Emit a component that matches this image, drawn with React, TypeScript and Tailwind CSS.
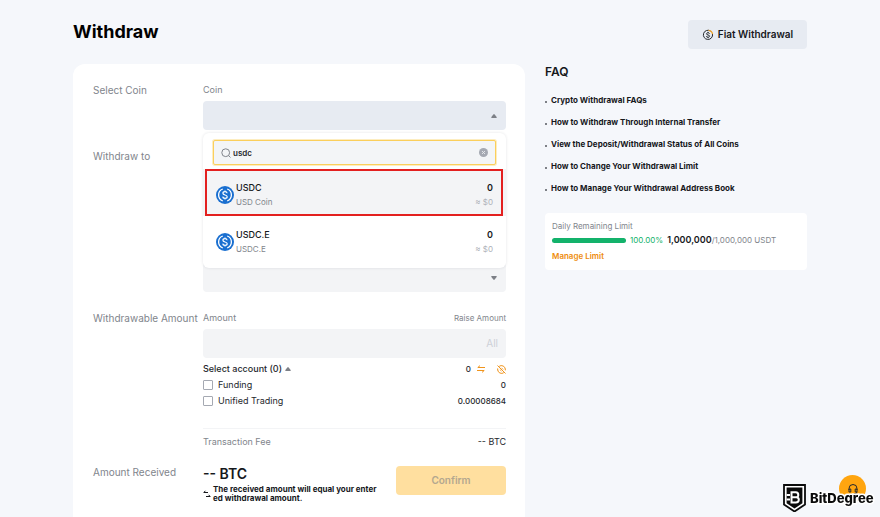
import React, { useState } from 'react';

const COINS = [
  { symbol: 'USDC', name: 'USD Coin' },
  { symbol: 'USDC.E', name: 'USDC.E' },
];

const FAQ_LINKS = [
  'Crypto Withdrawal FAQs',
  'How to Withdraw Through Internal Transfer',
  'View the Deposit/Withdrawal Status of All Coins',
  'How to Change Your Withdrawal Limit',
  'How to Manage Your Withdrawal Address Book',
];

const ACCOUNTS = [
  { id: 'funding', label: 'Funding', balance: '0' },
  { id: 'unified', label: 'Unified Trading', balance: '0.00008684' },
];

const Caret: React.FC<{ down?: boolean }> = ({ down }) => (
  <svg className={`w-[6px] h-[4px] shrink-0 ${down ? 'rotate-180' : ''}`} viewBox="0 0 6 4" fill="#7d8087">
    <path d="M2.5 0.3Q3 0 3.5 0.3L5.8 3.2Q6 4 5 4H1Q0 4 0.2 3.2Z" />
  </svg>
);

const UsdcIcon: React.FC = () => (
  <svg className="w-[18px] h-[18px] shrink-0" viewBox="0 0 18 18" fill="none">
    <circle cx="9" cy="9" r="9" fill="#1a6fd0" />
    <path d="M6.8 3a6.4 6.4 0 0 0 0 12M11.2 3a6.4 6.4 0 0 1 0 12" stroke="#fff" strokeWidth="1.3" />
    <path d="M11.1 7.2C11 6.2 10.2 5.7 9 5.7S6.9 6.3 6.9 7.3c0 2.3 4.3 1.1 4.3 3.4 0 1-.9 1.6-2.2 1.6s-2.2-.6-2.3-1.7M9 4.4v1.3M9 12.3v1.3" stroke="#fff" strokeWidth="1.2" />
  </svg>
);

const Header: React.FC = () => (
  <header className="flex items-start justify-between">
    <h1 className="text-[18px] leading-6 font-bold text-black">Withdraw</h1>
    <button type="button" className="flex h-[29px] w-[119px] items-center justify-center gap-1 rounded bg-[#e7ebf2] text-[10px] font-semibold text-[#16181c]">
      <svg className="w-3 h-3" viewBox="0 0 12 12" fill="none">
        <path d="M8.5 2A4.6 4.6 0 1 0 10.5 5" stroke="#25282d" strokeWidth="1" />
        <path d="M6.5 1.3A4.6 4.6 0 0 1 10.6 5.2" stroke="#f0a020" strokeWidth="1.2" />
        <path d="M7.6 4.6C7.4 4 6.8 3.8 6 3.8S4.5 4.2 4.5 4.9C4.5 6.4 7.6 5.6 7.6 7.1 7.6 7.8 7 8.2 6 8.2S4.5 7.9 4.4 7.2M6 2.9v.9M6 8.2v.9" stroke="#25282d" strokeWidth="1" />
      </svg>
      Fiat Withdrawal
    </button>
  </header>
);

const CoinDropdown: React.FC = () => {
  const [query, setQuery] = useState('usdc');

  return (
    <div className="absolute inset-x-0 top-full z-10 mt-[3px] rounded-md bg-white pt-[7px] pb-[5px] shadow-[0_0_3px_rgba(30,40,60,0.12)]">
      {/* Search */}
      <div className="mx-[10px] flex h-[25px] items-center gap-[2px] rounded-xs border border-[#fbcf5c] bg-[#f3f5f7] px-[7px] shadow-[0_0_0_1px_#fdedc0]">
        <svg className="w-[10px] h-[10px] shrink-0" viewBox="0 0 10 10" fill="none" stroke="#81858c">
          <circle cx="4.7" cy="4.7" r="3.9" />
          <path d="M7.5 7.5L9.5 9.5" />
        </svg>
        <input
          type="text"
          aria-label="Search coin"
          value={query}
          onChange={(e) => setQuery(e.target.value)}
          className="min-w-0 flex-1 bg-transparent text-[8px] font-semibold text-[#25282d] outline-none"
        />
        <button type="button" aria-label="Clear search" onClick={() => setQuery('')}>
          <svg className="block w-[9px] h-[9px]" viewBox="0 0 9 9">
            <circle cx="4.5" cy="4.5" r="4.5" fill="#a5a9b2" />
            <path d="M3 3l3 3M6 3L3 6" stroke="#e9ebee" strokeWidth="0.9" />
          </svg>
        </button>
      </div>

      {/* Options */}
      <ul role="listbox" aria-label="Coins" className="mt-1">
        {COINS.map((coin, i) => (
          <li
            key={coin.symbol}
            role="option"
            aria-selected={i === 0}
            className={`relative flex h-[47px] items-center gap-[2px] px-[13px] pt-[5px] ${i === 0 ? 'bg-[#f3f4f6]' : 'bg-white'}`}
          >
            {i === 0 && <span className="absolute inset-y-0 left-[2px] right-[3px] border-2 border-[#e3201f]"></span>}
            <UsdcIcon />
            <div className="flex flex-1 flex-col">
              <span className="text-[9px] leading-[14px] font-medium text-[#16181c]">{coin.symbol}</span>
              <span className="text-[8px] leading-[14px] text-[#81858c]">{coin.name}</span>
            </div>
            <div className="flex flex-col text-right">
              <span className="text-[9px] leading-[14px] font-semibold text-[#16181c]">0</span>
              <span className="text-[8px] leading-[14px] text-[#adb1b8]">≈ $0</span>
            </div>
          </li>
        ))}
      </ul>
    </div>
  );
};

const WithdrawForm: React.FC = () => (
  <main className="flex flex-1 flex-col rounded-t-xl bg-white pt-5 pr-[19px] pl-5">
    {/* Coin */}
    <section className="flex h-[66px]">
      <h2 className="w-[110px] shrink-0 text-[10px] leading-3 text-[#81858c]">Select Coin</h2>
      <div className="min-w-0 flex-1">
        <span id="coin-label" className="block text-[9px] leading-3 text-[#81858c]">Coin</span>
        <div className="relative mt-[5px]">
          <button type="button" aria-labelledby="coin-label" aria-expanded="true" className="flex h-[29px] w-full items-center justify-end rounded bg-[#e7ebf2] px-[9px]">
            <Caret />
          </button>
          <CoinDropdown />
        </div>
      </div>
    </section>

    {/* Address */}
    <section className="flex h-[162px]">
      <h2 className="w-[110px] shrink-0 text-[10px] leading-3 text-[#81858c]">Withdraw to</h2>
      <div className="flex min-w-0 flex-1 flex-col justify-end pb-5">
        <button type="button" aria-label="Withdraw to" className="flex h-[29px] w-full items-center justify-end rounded bg-[#f3f4f6] px-[9px]">
          <Caret down />
        </button>
      </div>
    </section>

    {/* Amount */}
    <section className="flex">
      <h2 className="w-[110px] shrink-0 whitespace-nowrap text-[10px] leading-3 text-[#81858c]">Withdrawable Amount</h2>
      <div className="min-w-0 flex-1">
        <div className="flex items-center justify-between">
          <label htmlFor="amount" className="text-[9px] leading-3 text-[#81858c]">Amount</label>
          <button type="button" className="text-[8px] leading-3 text-[#81858c]">Raise Amount</button>
        </div>
        <div className="mt-[5px] flex h-[29px] items-center rounded bg-[#f3f4f6] px-2">
          <input id="amount" type="text" className="min-w-0 flex-1 bg-transparent text-[10px] outline-none" />
          <button type="button" className="text-[10px] text-[#cdd0d6]">All</button>
        </div>

        <div className="mt-[3px] flex h-4 items-center justify-between text-[9px] text-[#25282d]">
          <button type="button" className="flex items-center gap-[3px] font-medium">
            Select account (0) <Caret />
          </button>
          <span className="flex items-center text-[8px] font-medium">
            0
            <svg className="ml-[6px] w-2 h-2 text-[#f0941d]" viewBox="0 0 8 8" fill="none" stroke="currentColor">
              <path d="M8 2.5H0.8L3 0.6M0 5.5H7.2L5 7.4" />
            </svg>
            <svg className="ml-3 w-[9px] h-[9px]" viewBox="0 0 9 9" fill="none" stroke="#f0941d">
              <path d="M2.2 1.3A3.9 3.9 0 0 1 8.3 4.2M6.8 7.7A3.9 3.9 0 0 1 0.7 4.8M0.5 0.5L8.5 8.5M0.7 3.4V5.2M8.3 3.8V5.4" />
              <path d="M4.5 2.8L6.2 4.5M2.8 4.5L4.5 6.2" strokeWidth="0.8" />
            </svg>
          </span>
        </div>

        {ACCOUNTS.map((account) => (
          <div key={account.id} className="flex h-4 items-center justify-between text-[#25282d]">
            <label htmlFor={account.id} className="flex items-center gap-[5px] text-[9px]">
              <input id={account.id} type="checkbox" className="w-[10px] h-[10px] appearance-none rounded-[1px] border border-[#a5a9b2] bg-white checked:bg-[#f0941d]" />
              {account.label}
            </label>
            <span className="text-[8px] leading-3 font-medium">{account.balance}</span>
          </div>
        ))}

        <div className="mt-[19px] flex h-[26px] items-center justify-between border-t border-[#f3f4f6] text-[9px]">
          <span className="text-[#81858c]">Transaction Fee</span>
          <span className="text-[#25282d]">-- BTC</span>
        </div>
      </div>
    </section>

    {/* Total */}
    <section className="mt-3 flex">
      <h2 className="w-[110px] shrink-0 text-[10px] leading-3 text-[#81858c]">Amount Received</h2>
      <div className="flex min-w-0 flex-1 items-start justify-between">
        <div>
          <p className="text-[14px] leading-4 font-semibold text-[#16181c]">-- BTC</p>
          <p className="mt-[3px] flex text-[8px] leading-[9px] font-bold text-[#16181c]">
            <svg className="mt-[5px] mr-[2px] w-2 h-2 shrink-0" viewBox="0 0 8 8" fill="none" stroke="currentColor">
              <path d="M5 2.5H0.8L2.4 0.8M3 6.5H7.2L5.6 4.8" />
            </svg>
            <span>The received amount will equal your enter<br />ed withdrawal amount.</span>
          </p>
        </div>
        <button type="button" disabled className="h-[29px] w-[110px] shrink-0 rounded bg-[#ffdf9f] text-[10px] font-semibold text-[#b3a78f]">
          Confirm
        </button>
      </div>
    </section>
  </main>
);

const Sidebar: React.FC = () => (
  <aside className="w-[262px] shrink-0">
    <h2 className="text-[12px] leading-4 font-semibold text-[#16181c]">FAQ</h2>
    <ul className="mt-[9px]">
      {FAQ_LINKS.map((text) => (
        <li key={text} className="flex h-[22px] items-center gap-1">
          <span className="mt-1 h-[2px] w-[2px] rounded-full bg-[#54585f]"></span>
          <a href="#" className="text-[8px] leading-3 font-bold text-[#16181c]">{text}</a>
        </li>
      ))}
    </ul>

    {/* Daily limit */}
    <div className="mt-[14px] rounded bg-white px-[7px] pt-[7px] pb-[6px]">
      <p className="text-[8px] leading-3 text-[#81858c]">Daily Remaining Limit</p>
      <div className="flex h-4 items-center">
        <div className="h-[5px] w-[74px] rounded-full bg-[#13b26b]"></div>
        <span className="ml-1 text-[8px] text-[#13b26b]">100.00%</span>
        <span className="ml-1 text-[9px] font-semibold text-[#16181c]">1,000,000</span>
        <span className="text-[8px] text-[#81858c]">/1,000,000 USDT</span>
      </div>
      <a href="#" className="block text-[8px] leading-4 font-semibold text-[#ee8c0c]">Manage Limit</a>
    </div>
  </aside>
);

const BrandBadge: React.FC = () => (
  <div className="fixed right-[5px] bottom-1 h-[40px] w-[92px]">
    <button type="button" aria-label="Support" className="absolute top-[2px] right-[9px] flex h-[27px] w-[27px] items-center justify-center rounded-full bg-[#ffa50f]">
      <svg className="w-3 h-3" viewBox="0 0 12 12" fill="none" stroke="#25282d">
        <path d="M2 7V5.5a4 4 0 0 1 8 0V7M2 6h1.8v3H2zM8.2 6H10v3H8.2zM10 9q0 2-3 2" />
      </svg>
    </button>
    <div className="absolute inset-x-0 bottom-px flex items-center gap-1">
      <svg className="w-[23px] h-[28px] shrink-0" viewBox="0 0 23 28">
        <path d="M1 1H22V20.5L11.5 27.5L1 20.5Z" fill="#fff" stroke="#0b0b0b" strokeWidth="1.8" />
        <path d="M3.6 3.6H19.4V19.2L11.5 24.4L3.6 19.2Z" fill="#0b0b0b" />
        <path d="M3.6 11H7M3.6 15.5H7M8.5 8.3V18.5H12.8Q15.8 18.5 15.8 15.8 15.8 13.5 13.5 13.3 15.3 13 15.3 11 15.3 8.3 12.8 8.3ZM8.5 13.3H13.5" fill="none" stroke="#fff" strokeWidth="2" />
      </svg>
      <span className="text-[13px] leading-7 font-extrabold text-[#0b0b0b] [-webkit-text-stroke:3px_white] [paint-order:stroke_fill]">BitDegree</span>
    </div>
  </div>
);

const App: React.FC = () => (
  <div className="flex min-h-screen flex-col bg-[#f5f7fb] px-[73px] pt-5 font-['Inter','Liberation_Sans',sans-serif]">
    <Header />
    <div className="mt-[15px] flex flex-1 gap-5">
      <WithdrawForm />
      <Sidebar />
    </div>
    <BrandBadge />
  </div>
);

export default App;
